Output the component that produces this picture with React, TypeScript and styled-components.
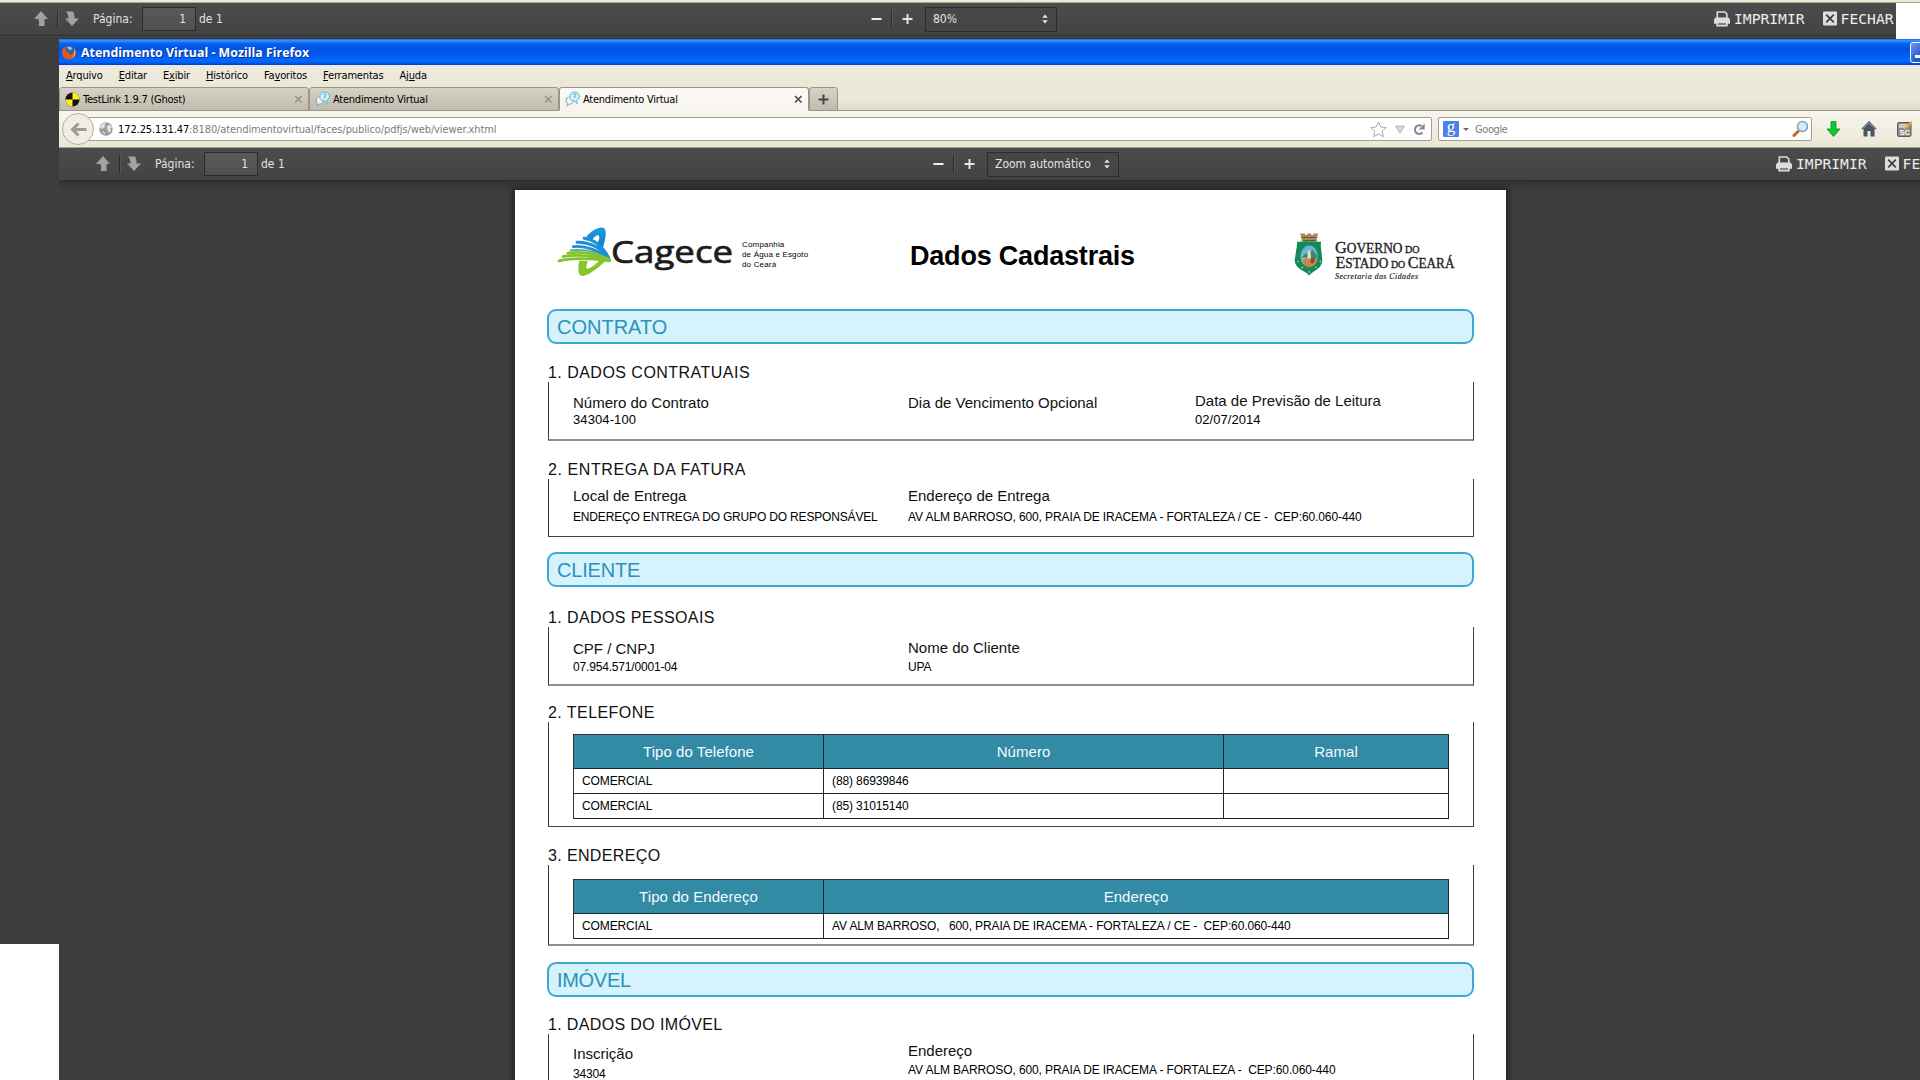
import React from "react";
import styled, { createGlobalStyle } from "styled-components";

const sans = '"Liberation Sans", Arial, sans-serif';
const ui = '"DejaVu Sans Condensed", "DejaVu Sans", Tahoma, sans-serif';
const mono = '"DejaVu Sans Mono", monospace';

const Global = createGlobalStyle`
  * { box-sizing: border-box; }
  html, body { margin: 0; background: #fff; overflow: hidden; }
  svg { display: block; flex: none; }
`;

const Desktop = styled.main`
  position: relative;
  width: 1920px;
  height: 1080px;
  overflow: hidden;
  background: #fff;
`;

const BackWindow = styled.section`
  position: absolute;
  left: 0;
  top: 0;
  width: 1896px;
  height: 944px;
  background: #3d3d3d;
  overflow: hidden;
`;

const BackEdge = styled.div`
  height: 3px;
  background: #ece9d8;
  border-bottom: 1px solid #aaa89c;
`;

const TopEdge = styled(BackEdge)`
  width: 1920px;
  position: absolute;
  left: 0;
  top: 0;
`;

const FrontWindow = styled.section`
  position: absolute;
  left: 59px;
  top: 39px;
  width: 1960px;
  height: 1060px;
  display: flex;
  flex-direction: column;
  background: #3d3d3d;
`;

/* ---------- viewer toolbar ---------- */

const Bar = styled.div<{ $shift: number }>`
  display: grid;
  grid-template-columns: 870px 844px 1fr;
  flex: none;
  height: 33px;
  padding-left: ${(p) => p.$shift}px;
  background: linear-gradient(#4c4c4c, #434343);
  border-bottom: 1px solid #2d2d2d;
  box-shadow: 0 1px 0 #484848;
  color: #e2e2e2;
  font: 12px ${ui};
  white-space: nowrap;
`;

const BarGroup = styled.div<{ $pad?: number }>`
  display: flex;
  align-items: center;
  height: 32px;
  padding-left: ${(p) => p.$pad ?? 0}px;
`;

const Split = styled.i<{ $l: number; $r: number }>`
  width: 2px;
  height: 18px;
  margin: 0 ${(p) => p.$r}px 0 ${(p) => p.$l}px;
  background: #2c2c2c;
  border-right: 1px solid #555;
`;

const PageLabel = styled.span`
  width: 49px;
  margin-left: 13px;
`;

const PageInput = styled.div`
  width: 54px;
  height: 24px;
  margin-right: 3px;
  padding-right: 9px;
  border: 1px solid #2b2b2b;
  background: linear-gradient(#595959, #505050);
  text-align: right;
  line-height: 22px;
`;

const ZoomSelect = styled.div`
  display: flex;
  align-items: center;
  justify-content: space-between;
  width: 132px;
  height: 25px;
  margin-left: 12px;
  padding: 0 8px 0 7px;
  border: 1px solid #2c2c2c;
  background: #464646;
`;

const Action = styled.span`
  display: flex;
  align-items: center;
  gap: 4px;
  margin: -1px 18px 0 0;
  color: #ececec;
  font: 14.67px ${mono};
`;

const ArrowUp = () => (
  <svg width="15" height="16" viewBox="0 0 15 16"><path fill="#a2a2a2" d="M7 0 L14 8 H10.5 V15 H4.5 C5.5 13 5 10.5 4.5 8 H0 Z" /></svg>
);
const ArrowDown = () => (
  <svg width="15" height="16" viewBox="0 0 15 16"><path fill="#a2a2a2" d="M1 0.5 H8 C9.5 3 9.5 5 9.5 7.5 H14 L7 15 L0 7.5 H3.5 C3.5 5 3 3 1 0.5 Z" /></svg>
);
const Minus = () => (
  <svg width="11" height="12" viewBox="0 0 11 12"><path fill="#efefef" d="M0.5 5h10v2h-10z" /></svg>
);
const Plus = () => (
  <svg width="11" height="12" viewBox="0 0 11 12"><path fill="#e4e4e4" d="M0.5 5h4V1h2v4h4v2h-4v4h-2V7h-4z" /></svg>
);
const Spin = () => (
  <svg width="6" height="10" viewBox="0 0 6 10"><path fill="#e8e8e8" d="M3 0.5 L5.7 3.8 H0.3Z M3 9.5 L5.7 6.2 H0.3Z" /></svg>
);
const Printer = () => (
  <svg width="16" height="16" viewBox="0 0 16 16">
    <path fill="none" stroke="#dcdcdc" strokeWidth="1.6" d="M3.3 7V1h7.5l2 2v4" />
    <path fill="#dcdcdc" d="M1.5 6.500h13l1.500 2v4.200h-2.300v2.800H2.300v-2.800H0V8.500z" />
    <path stroke="#484848" strokeWidth="1.200" d="M4 13h8" />
  </svg>
);
const CloseBox = () => (
  <svg width="14" height="15" viewBox="0 0 14 15">
    <rect y="0.5" width="14" height="14" rx="1" fill="#dedede" />
    <path stroke="#3c3c3c" strokeWidth="1.7" d="M3.2 3.7l7.6 7.6M10.8 3.7l-7.6 7.6" />
  </svg>
);

const ViewerToolbar = ({ shift, zoom }: { shift: number; zoom: string }) => (
  <Bar $shift={shift}>
    <BarGroup $pad={34}>
      <ArrowUp />
      <Split $l={8} $r={6} />
      <ArrowDown />
      <PageLabel>Página:</PageLabel>
      <PageInput>1</PageInput>
      de 1
    </BarGroup>
    <BarGroup $pad={1}>
      <Minus />
      <Split $l={9} $r={9} />
      <Plus />
      <ZoomSelect>
        {zoom}
        <Spin />
      </ZoomSelect>
    </BarGroup>
    <BarGroup>
      <Action><Printer />IMPRIMIR</Action>
      <Action><CloseBox />FECHAR</Action>
    </BarGroup>
  </Bar>
);

/* ---------- browser chrome ---------- */

const TitleBar = styled.header`
  display: flex;
  align-items: center;
  flex: none;
  height: 26px;
  padding-left: 3px;
  background: linear-gradient(#1b6ce4 0, #3b92ff 7%, #0a63ec 16%, #0054e3 35%, #0058ec 55%, #0068ff 78%, #0066fc 88%, #003dc0 100%);
`;

const TitleText = styled.h1`
  width: 1829px;
  margin: 0 0 0 5px;
  color: #fff;
  font: bold 12.4px "Open Sans", sans-serif;
  text-shadow: 1px 1px 0 #0a2f8c;
`;

const Minimize = styled.span`
  display: flex;
  align-items: flex-end;
  width: 21px;
  height: 21px;
  padding: 0 0 4px 4px;
  border: 1px solid #fff;
  border-radius: 3px;
  background: linear-gradient(135deg, #6f93ef, #2456d6 60%);
  &::after { content: ""; width: 7px; height: 3px; background: #fff; }
`;

const MenuBar = styled.nav`
  display: flex;
  flex: none;
  gap: 16px;
  height: 21px;
  padding: 0 0 0 7px;
  background: linear-gradient(#efeadf, #ebe8d7);
  font: 11px/21px ${ui};
  letter-spacing: -0.17px;
  color: #000;
`;

const Tabs = styled.div`
  display: flex;
  align-items: flex-end;
  flex: none;
  height: 25px;
  background: linear-gradient(#ebe8d7 55%, #dedbcb);
  box-shadow: inset 0 -1px 0 #98968a;
`;

const Tab = styled.div<{ $active?: boolean }>`
  display: flex;
  align-items: center;
  width: 250px;
  height: 24px;
  padding: 0 5px;
  border: 1px solid #98968a;
  border-bottom-color: ${(p) => (p.$active ? "#f6f4ec" : "#98968a")};
  border-radius: 3px 3px 0 0;
  background: ${(p) => (p.$active ? "linear-gradient(#fbfaf5, #f6f4ec)" : "linear-gradient(#d6d3c6, #bfbcae)")};
  font: 11px ${ui};
  letter-spacing: -0.24px;
`;

const TabTitle = styled.span`
  flex: 1;
  margin: 1px 0 0 3px;
`;

const NewTab = styled(Tab)`
  width: 29px;
  justify-content: center;
`;

const NavBar = styled.div`
  display: flex;
  align-items: center;
  flex: none;
  height: 37px;
  padding-left: 3px;
  background: linear-gradient(#f7f5ed, #ebe7d6);
  border-bottom: 1px solid #a09d90;
`;

const BackButton = styled.span`
  display: flex;
  align-items: center;
  justify-content: center;
  z-index: 1;
  width: 32px;
  height: 32px;
  border: 1px solid #b2afa3;
  border-radius: 50%;
  background: #f0eee4;
`;

const Field = styled.div`
  display: flex;
  align-items: center;
  height: 24px;
  border: 1px solid #a19e93;
  border-radius: 2px;
  background: #fff;
  color: #7b7b7b;
  font: 11px ${ui};
  white-space: nowrap;
`;

const UrlField = styled(Field)`
  width: 1346px;
  margin-left: -8px;
  padding: 0 6px 0 12px;
`;

const Url = styled.span`
  flex: 1;
  margin: 1px 0 0 5px;
  letter-spacing: -0.1px;
  b { font-weight: normal; color: #000; }
`;

const SearchField = styled(Field)`
  width: 374px;
  margin-left: 6px;
  padding: 0 2px 0 4px;
`;

const SearchHint = styled.span`
  flex: 1;
  margin: 1px 0 0 6px;
  letter-spacing: -0.4px;
`;

const UrlIcons = styled.span`
  display: flex;
  align-items: center;
  gap: 8px;
`;

const NavIcons = styled.span`
  display: flex;
  align-items: center;
  gap: 20px;
  margin-left: 14px;
`;

const Firefox = () => (
  <svg width="14" height="15" viewBox="0 0 14 15">
    <circle cx="7" cy="7.5" r="6.8" fill="#e5641c" />
    <circle cx="7.6" cy="5.8" r="5" fill="#2a62b4" />
    <path fill="#8fc8ee" d="M5 2.500c2-1.400 4.500-.8 5.200 1L8 5.500z" />
    <path fill="#e4571a" d="M0.5 3.500 C2 3 4 4 4.500 6 L6.500 7 C6 8.800 8 9.800 10 9.200 C11.800 8.500 12.300 6 11.800 3.500 C14 6 14.500 10 11.500 12.800 C8 15.500 3 14.500 1 11 C0 9 0 6 .5 3.500Z" />
    <path fill="#ffc531" d="M12 3.500c2.200 2.800 1.800 7.200-1.400 9.500 1.600-3 2.200-6 1.400-9.500z" />
  </svg>
);
const TestLinkIcon = () => (
  <svg width="15" height="15" viewBox="0 0 15 15">
    <circle cx="7.500" cy="7.500" r="7" fill="#111" />
    <path fill="#ffee1c" d="M7.500 7.500V.5A7 7 0 0 1 14.500 7.500zM7.500 7.500v7A7 7 0 0 1 .5 7.500z" />
  </svg>
);
const ChatIcon = () => (
  <svg width="15" height="16" viewBox="0 0 15 16">
    <path d="M3.500 6a3.800 3.800 0 0 0-1 6.500L2 15l2.500-2c3 .5 4-2 3.500-4" fill="#eef3f6" stroke="#8b9dab" />
    <path d="M9.500 1c-6 .5-6 8-1.500 8.500l1.500.2 2.500 3-.2-3.500C16.500 7 14.500 1 9.500 1z" fill="#d4f0fb" stroke="#58b6de" />
    <path d="M8.300 3.800c.5-1.500 3-1 2.500.6L9.600 6v1" fill="none" stroke="#3b9fd0" />
  </svg>
);
const TabClose = ({ color }: { color: string }) => (
  <svg width="9" height="9" viewBox="0 0 9 9"><path stroke={color} strokeWidth="1.700" d="M1 1l6.500 6.500M7.500 1L1 7.500" /></svg>
);
const Globe = () => (
  <svg width="14" height="14" viewBox="0 0 14 14">
    <circle cx="7" cy="7" r="6.700" fill="#9a9a9a" />
    <path fill="#e4e4e4" d="M2 3c2-2 4-2 5-1.500L5.500 3.500 6 5 3.500 7 1 6zM8 4l3-1.500 2 3-1.500 1L12 9l-2 2-1.500-3zM3 9l3 1-.5 2.500z" />
  </svg>
);
const UrlTools = () => (
  <UrlIcons>
    <svg width="17" height="17" viewBox="0 0 17 17"><path fill="#fff" stroke="#a9a9a9" d="M8.500 1l2.300 5 5.400.6-4 3.700 1.100 5.400-4.800-2.700-4.800 2.700 1.100-5.400-4-3.700L6.200 6z" /></svg>
    <svg width="10" height="9" viewBox="0 0 10 9"><path fill="#d2d6de" stroke="#a2a6ae" strokeWidth=".8" d="M.5 1h9L5 8z" /></svg>
    <svg width="12" height="13" viewBox="0 0 12 13"><path fill="none" stroke="#858b96" strokeWidth="2.200" d="M9.500 9.500A4.300 4.300 0 1 1 8.500 3" /><path fill="#858b96" d="M11.700.5v6H5.700z" /></svg>
  </UrlIcons>
);
const GoogleBadge = styled.span`
  width: 16px;
  height: 16px;
  border-radius: 1px;
  background: #4a80ea;
  color: #fff;
  font: 17px/11px "Liberation Serif", serif;
  text-align: center;
`;
const Caret = styled.i`
  margin-left: 4px;
  border: 3px solid transparent;
  border-top: 3px solid #666;
  border-bottom: 0;
`;
const Magnifier = () => (
  <svg width="17" height="18" viewBox="0 0 17 18">
    <path stroke="#b5692f" strokeWidth="3" strokeLinecap="round" d="M2 15.500l4-4" />
    <circle cx="10.500" cy="6.500" r="5" fill="#d2ebf8" stroke="#8e9fb4" strokeWidth="1.600" />
  </svg>
);
const NavTools = () => (
  <NavIcons>
    <svg width="15" height="16" viewBox="0 0 15 16"><path fill="#12c62c" stroke="#0a8f1b" strokeWidth=".8" d="M5 .5h5V8h4L7.500 15.500 1 8h4z" /></svg>
    <svg width="16" height="16" viewBox="0 0 16 16"><path fill="#4a545f" d="M8 0l7.500 7.500-1 1L13.500 8v7.500h-4V10h-3v5.500h-4V8l-1 .5-1-1z" /><path fill="none" stroke="#9ba5ae" d="M2 7.500l6-5.500 6 5.500" /></svg>
    <svg width="16" height="16" viewBox="0 0 16 16"><rect x=".5" y="1.500" width="13.500" height="14" rx="1.500" fill="#8c8c88" stroke="#5c5c58" /><path fill="#c9c9c5" d="M2 3h8v4H2z" /><path stroke="#e2b43b" strokeWidth="2" d="M15 .8L7.500 8" /><text x="2.500" y="14" fontSize="7.500" fontWeight="bold" fill="#fff" fontFamily="Liberation Sans">SC</text></svg>
  </NavIcons>
);

/* ---------- document ---------- */

const Content = styled.div`
  flex: 1;
  padding: 9px 0 0 456px;
  background: linear-gradient(#333 0, #3d3d3d 9px);
`;

const Page = styled.article`
  display: flex;
  flex-direction: column;
  width: 991px;
  height: 950px;
  padding: 0 32px 0 33px;
  background: #fff;
  box-shadow: 0 0 5px 3px rgba(0, 0, 0, 0.34);
  color: #111;
  font-family: ${sans};
`;

const DocHeader = styled.header`
  display: flex;
  align-items: flex-start;
  flex: none;
  height: 119px;
  padding: 30px 9px 0 2px;
`;

const Slogan = styled.p`
  width: 168px;
  margin: 20px 0 0 9px;
  font-size: 8px;
  line-height: 10px;
  letter-spacing: 0.17px;
  color: #000;
`;

const DocTitle = styled.h2`
  flex: 1;
  margin: 19px 0 0;
  font-size: 27px;
  line-height: 34px;
  letter-spacing: -0.2px;
  color: #000;
`;

const Section = styled.h3<{ $gap?: number; $ls?: number }>`
  flex: none;
  height: 35px;
  margin: ${(p) => p.$gap ?? 0}px 0 0 -1px;
  padding: 1px 0 0 8px;
  border: 2px solid #3ba9d6;
  border-radius: 9px;
  background: #d5f2fd;
  color: #2c93b8;
  font-size: 20px;
  font-weight: normal;
  line-height: 31px;
  letter-spacing: ${(p) => p.$ls ?? 0}px;
`;

const GroupTitle = styled.h4<{ $gap: number; $ls: number }>`
  flex: none;
  height: 20px;
  margin: ${(p) => p.$gap}px 0 0;
  font-size: 16px;
  font-weight: normal;
  line-height: 22px;
  letter-spacing: ${(p) => p.$ls}px;
`;

const Bracket = styled.div<{ $h: number; $pad?: number; $soft?: boolean }>`
  display: grid;
  grid-template-columns: 335px 287px 1fr;
  align-content: start;
  flex: none;
  height: ${(p) => p.$h}px;
  padding: ${(p) => p.$pad ?? 0}px 24px 0;
  border: 1px solid #3c3c3c;
  border-top: 0;
  border-bottom: ${(p) => (p.$soft ? "2px solid #8e8e8e" : "1px solid #444")};
`;

const FieldBox = styled.div<{ $top: number }>`
  padding-top: ${(p) => p.$top}px;
  white-space: pre;
`;

const Label = styled.div`
  font-size: 15px;
  line-height: 18px;
`;

const Value = styled.div<{ $gap: number; $large?: boolean; $ls: number }>`
  margin-top: ${(p) => p.$gap}px;
  font-size: ${(p) => (p.$large ? 13 : 12)}px;
  line-height: 16px;
  letter-spacing: ${(p) => p.$ls}px;
  color: #000;
`;

type InfoProps = { label: string; value?: string; top: number; gap: number; large?: boolean; ls?: number };

const Info = ({ label, value, top, gap, large, ls = -0.17 }: InfoProps) => (
  <FieldBox $top={top}>
    <Label>{label}</Label>
    {value && <Value $gap={gap} $large={large} $ls={ls}>{value}</Value>}
  </FieldBox>
);

const Table = styled.div<{ $cols: string }>`
  display: grid;
  grid-column: 1 / -1;
  grid-template-columns: ${(p) => p.$cols};
  border: 1px solid #333;
  border-width: 1px 0 0 1px;
`;

const HeadCell = styled.div`
  height: 34px;
  border: 1px solid #0e2c36;
  border-width: 0 1px 1px 0;
  background: #328aa5;
  color: #f2fbff;
  font-size: 15px;
  line-height: 33px;
  letter-spacing: 0.06px;
  text-align: center;
`;

const Cell = styled.div`
  height: 25px;
  padding-left: 8px;
  border: 1px solid #222;
  border-width: 0 1px 1px 0;
  color: #000;
  font-size: 12px;
  line-height: 24px;
  letter-spacing: -0.12px;
  white-space: pre;
`;

const DataTable = ({ cols, head, rows }: { cols: string; head: string[]; rows: string[][] }) => (
  <Table $cols={cols}>
    {head.map((h) => <HeadCell key={h}>{h}</HeadCell>)}
    {rows.map((r, i) => r.map((c, j) => <Cell key={`${i}-${j}`}>{c}</Cell>))}
  </Table>
);

const CageceLogo = () => (
  <svg width="183" height="60" viewBox="0 0 183 60">
    <defs>
      <linearGradient id="blue" x1="0" y1="0" x2="0" y2="1"><stop offset="0" stopColor="#1a9be0" /><stop offset="1" stopColor="#1477bf" /></linearGradient>
    </defs>
    <g transform="translate(1 0) scale(.3375)" fill="none" strokeWidth="8.500" strokeLinecap="round">
      <path fill="url(#blue)" d="M104 50 C120 30 146 17 157 24 C167 34 161 60 151 92 L134 74 C145 58 145 48 140 45 C135 44 128 50 122 58 Z" />
      <g stroke="#1d8fd6">
        <path d="M98 54 C125 58 152 76 170 110" />
        <path d="M77 66 C112 64 148 82 170 112" />
        <path d="M66 79 C102 75 142 90 170 114" />
      </g>
      <g stroke="#57ab8f"><path strokeWidth="5" d="M58 90 C96 85 138 96 170 115" /></g>
      <path fill="#86c52c" d="M84 120 C78 148 80 167 96 166 C114 163 140 142 162 121 L146 118 C130 134 114 146 107 144 C102 141 105 132 110 122 Z" />
      <g stroke="#83c42b">
        <path d="M50 98 C92 92 134 100 174 118" />
        <path d="M36 108 C80 101 130 107 174 119" />
        <path d="M24 121 C68 110 120 114 174 121" />
      </g>
    </g>
    <text x="61" y="43" fontFamily="Open Sans, sans-serif" fontSize="31" fill="#1c1c1c" stroke="#1c1c1c" strokeWidth=".7" textLength="122" lengthAdjust="spacingAndGlyphs">Cagece</text>
  </svg>
);

const GovBox = styled.div`
  padding-top: 5px;
`;

const GovLogo = () => (
  <GovBox>
    <svg width="180" height="60" viewBox="0 0 180 60">
      <g transform="translate(-.8 .5)">
        <path fill="#a98a5c" d="M16 8h5v1.500h2V8h4v1.500h2V8h5l-1.500 5 .5 3H17l.5-3z" />
        <path stroke="#6f5430" strokeWidth="1" d="M17 12h16M19 15h12" />
        <path fill="#138a54" d="M13 16 C18 17 20 15 25 16 C30 15 33 17 37 16 C36 20 37 23 37.500 28 C38 35 39 36 36 41 C33 45 28 46 25 50 C22 46 16 45 13 41 C9 36 11 33 11.500 28 C12 23 13 21 13 16Z" />
        <ellipse cx="25" cy="31" rx="8.500" ry="10.500" fill="#8fc3dc" />
        <path fill="#6db4d8" d="M17 29c1-6 4-9 8-9s7 3 8 9z" />
        <path fill="#3c8a68" d="M17 32l4-4 4 1 3-5 5 6v3z" />
        <path fill="#c98346" d="M18 34c5-2 10-2 15 0-1 5-4 7.500-8 7.500s-6-3-7-7.500z" />
        <path fill="#e8d9c4" d="M24 25l2 0 1 8h-4z" />
        <path fill="#8a4a32" d="M27 32l4 1-2 5-3-1z" />
        <g fill="#eaf6ee"><circle cx="14" cy="36" r=".7" /><circle cx="36" cy="36" r=".7" /><circle cx="18" cy="42" r=".7" /><circle cx="32" cy="42" r=".7" /><circle cx="25" cy="46.500" r=".8" /></g>
      </g>
      <g fontFamily="Liberation Serif, serif" fill="#222" stroke="#222" strokeWidth=".35">
        <text x="50" y="27.500" fontSize="17" textLength="84.500" lengthAdjust="spacingAndGlyphs">G<tspan fontSize="14">OVERNO</tspan><tspan fontSize="10.500"> DO</tspan></text>
        <text x="50.500" y="43" fontSize="17" textLength="119" lengthAdjust="spacingAndGlyphs">E<tspan fontSize="14">STADO</tspan><tspan fontSize="10.500"> DO </tspan>C<tspan fontSize="14">EARÁ</tspan></text>
        <text x="50" y="53.500" fontSize="8" fontStyle="italic" strokeWidth=".15" textLength="83" lengthAdjust="spacing">Secretaria das Cidades</text>
      </g>
    </svg>
  </GovBox>
);

export default function App() {
  return (
    <Desktop>
      <Global />
      <BackWindow>
        <BackEdge />
        <ViewerToolbar shift={0} zoom="80%" />
      </BackWindow>
      <TopEdge />
      <FrontWindow>
        <TitleBar>
          <Firefox />
          <TitleText>Atendimento Virtual - Mozilla Firefox</TitleText>
          <Minimize />
        </TitleBar>
        <MenuBar>
          <span><u>A</u>rquivo</span>
          <span><u>E</u>ditar</span>
          <span>E<u>x</u>ibir</span>
          <span><u>H</u>istórico</span>
          <span>Fa<u>v</u>oritos</span>
          <span><u>F</u>erramentas</span>
          <span>Aj<u>u</u>da</span>
        </MenuBar>
        <Tabs>
          <Tab><TestLinkIcon /><TabTitle>TestLink 1.9.7 (Ghost)</TabTitle><TabClose color="#98968c" /></Tab>
          <Tab><ChatIcon /><TabTitle>Atendimento Virtual</TabTitle><TabClose color="#98968c" /></Tab>
          <Tab $active><ChatIcon /><TabTitle>Atendimento Virtual</TabTitle><TabClose color="#4c4c4a" /></Tab>
          <NewTab>
            <svg width="11" height="11" viewBox="0 0 11 11"><path stroke="#444" strokeWidth="2" d="M5.500 .5v10M.5 5.500h10" /></svg>
          </NewTab>
        </Tabs>
        <NavBar>
          <BackButton>
            <svg width="17" height="15" viewBox="0 0 17 15"><path fill="none" stroke="#9d9b93" strokeWidth="3" d="M8.500 1.500L2.500 7.500l6 6M3 7.500h13.500" /></svg>
          </BackButton>
          <UrlField>
            <Globe />
            <Url><b>172.25.131.47</b>:8180/atendimentovirtual/faces/publico/pdfjs/web/viewer.xhtml</Url>
            <UrlTools />
          </UrlField>
          <SearchField>
            <GoogleBadge>g</GoogleBadge>
            <Caret />
            <SearchHint>Google</SearchHint>
            <Magnifier />
          </SearchField>
          <NavTools />
        </NavBar>
        <ViewerToolbar shift={3} zoom="Zoom automático" />
        <Content>
          <Page>
            <DocHeader>
              <CageceLogo />
              <Slogan>Companhia<br />de Água e Esgoto<br />do Ceará</Slogan>
              <DocTitle>Dados Cadastrais</DocTitle>
              <GovLogo />
            </DocHeader>

            <Section>CONTRATO</Section>
            <GroupTitle $gap={18} $ls={0.47}>1. DADOS CONTRATUAIS</GroupTitle>
            <Bracket $h={59} $soft>
              <Info label="Número do Contrato" value="34304-100" top={12} gap={0} large ls={0.1} />
              <Info label="Dia de Vencimento Opcional" top={12} gap={0} />
              <Info label="Data de Previsão de Leitura" value="02/07/2014" top={10} gap={2} large ls={0.05} />
            </Bracket>
            <GroupTitle $gap={18} $ls={0.58}>2. ENTREGA DA FATURA</GroupTitle>
            <Bracket $h={58}>
              <Info label="Local de Entrega" value="ENDEREÇO ENTREGA DO GRUPO DO RESPONSÁVEL" top={8} gap={4} />
              <Info label="Endereço de Entrega" value="AV ALM BARROSO, 600, PRAIA DE IRACEMA - FORTALEZA / CE -  CEP:60.060-440" top={8} gap={4} ls={-0.1} />
            </Bracket>

            <Section $gap={15} $ls={-0.2}>CLIENTE</Section>
            <GroupTitle $gap={20} $ls={0.4}>1. DADOS PESSOAIS</GroupTitle>
            <Bracket $h={59} $soft>
              <Info label="CPF / CNPJ" value="07.954.571/0001-04" top={13} gap={1} />
              <Info label="Nome do Cliente" value="UPA" top={12} gap={2} />
            </Bracket>
            <GroupTitle $gap={16} $ls={0.44}>2. TELEFONE</GroupTitle>
            <Bracket $h={105} $pad={12}>
              <DataTable
                cols="250px 400px 1fr"
                head={["Tipo do Telefone", "Número", "Ramal"]}
                rows={[["COMERCIAL", "(88) 86939846", ""], ["COMERCIAL", "(85) 31015140", ""]]}
              />
            </Bracket>
            <GroupTitle $gap={18} $ls={0.37}>3. ENDEREÇO</GroupTitle>
            <Bracket $h={81} $pad={14} $soft>
              <DataTable
                cols="250px 1fr"
                head={["Tipo do Endereço", "Endereço"]}
                rows={[["COMERCIAL", "AV ALM BARROSO,   600, PRAIA DE IRACEMA - FORTALEZA / CE -  CEP:60.060-440"]]}
              />
            </Bracket>

            <Section $gap={16} $ls={-0.3}>IMÓVEL</Section>
            <GroupTitle $gap={17} $ls={0.36}>1. DADOS DO IMÓVEL</GroupTitle>
            <Bracket $h={100}>
              <Info label="Inscrição" value="34304" top={11} gap={3} />
              <Info label="Endereço" value="AV ALM BARROSO, 600, PRAIA DE IRACEMA - FORTALEZA -  CEP:60.060-440" top={8} gap={2} ls={-0.1} />
            </Bracket>
          </Page>
        </Content>
      </FrontWindow>
    </Desktop>
  );
}
